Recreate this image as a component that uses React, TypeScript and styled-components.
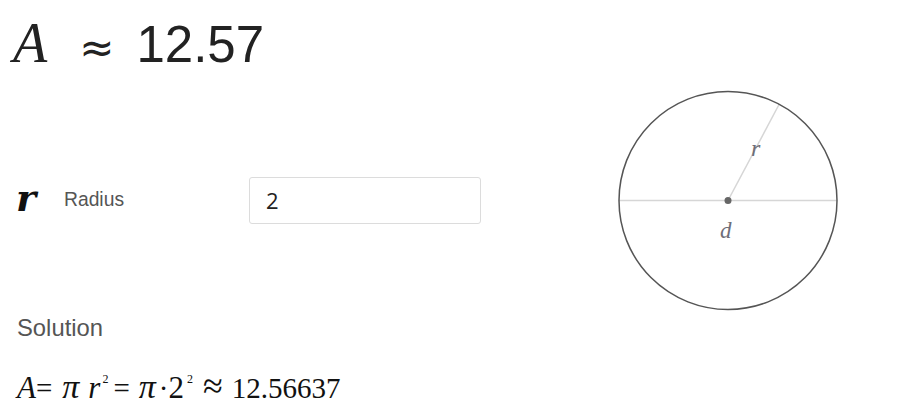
import React from "react";
import styled, { createGlobalStyle } from "styled-components";

const Global = createGlobalStyle`
  html, body { margin: 0; padding: 0; background: #fff; }
  body { font-family: "Liberation Sans", Arial, sans-serif; }
`;

const Page = styled.div`
  width: 916px;
  height: 412px;
  display: flex;
  flex-direction: row;
  overflow: hidden;
`;

const Left = styled.div`
  flex: 1;
  display: flex;
  flex-direction: column;
  padding-left: 13px;
`;

const Header = styled.div`
  display: flex;
  align-items: baseline;
  height: 92px;
  line-height: 87px;
  color: #222;
`;

const MathVar = styled.span<{ $size: number }>`
  font-family: "Liberation Serif", "Times New Roman", serif;
  font-style: italic;
  font-size: ${(p) => p.$size}px;
`;

const BoldVar = styled.span`
  font-family: "DejaVu Serif", "Liberation Serif", serif;
  font-style: italic;
  font-weight: 700;
  font-size: 38px;
`;

const Approx = styled.span`
  font-family: "DejaVu Sans", sans-serif;
  font-size: 42px;
  margin-left: 32px;
  margin-right: 22px;
`;

const BigNumber = styled.span`
  font-family: "Liberation Sans", Arial, sans-serif;
  font-size: 51px;
`;

const InputRow = styled.div`
  display: flex;
  align-items: center;
  height: 48px;
  margin-top: 84px;
  padding-left: 3px;
`;

const VarCell = styled.div`
  width: 48px;
  color: #111;
  line-height: 1;
  padding-bottom: 4px;
`;

const FieldLabel = styled.div`
  width: 185px;
  font-size: 19.3px;
  color: #555;
`;

const NumberInput = styled.input`
  box-sizing: border-box;
  width: 232px;
  height: 47px;
  border: 1px solid #dcdcdc;
  border-radius: 3px;
  padding: 0 16px;
  font-family: "Open Sans", "Noto Sans", sans-serif;
  font-size: 22px;
  color: #222;
  outline: none;
`;

const SolutionLabel = styled.div`
  margin-top: 90px;
  padding-left: 4px;
  font-size: 23.8px;
  color: #555;
`;

const Formula = styled.div`
  margin-top: 23px;
  padding-left: 4px;
  font-family: "Liberation Serif", "Times New Roman", serif;
  font-size: 29px;
  color: #111;
  white-space: nowrap;
  display: flex;
  align-items: baseline;
`;

const Sym = styled.span<{ $gap?: number; $italic?: boolean; $size?: number }>`
  font-style: ${(p) => (p.$italic ? "italic" : "normal")};
  font-size: ${(p) => p.$size ?? 29}px;
  margin-right: ${(p) => p.$gap ?? 0}px;
`;

const Sup = styled.span<{ $gap?: number }>`
  font-size: 12px;
  position: relative;
  top: -15px;
  margin-right: ${(p) => p.$gap ?? 0}px;
`;

const Figure = styled.div`
  width: 240px;
  margin-right: 68px;
  padding-top: 80px;
`;

const labelColor = "#6e6e78";

function CircleFigure() {
  const cx = 120;
  const cy = 120.5;
  const r = 109;
  const ang = (62 * Math.PI) / 180;
  const ex = cx + r * Math.cos(ang);
  const ey = cy - r * Math.sin(ang);
  return (
    <svg width="240" height="240" viewBox="0 0 240 240">
      <line x1={cx - r} y1={cy} x2={cx + r} y2={cy} stroke="#d6d6d6" strokeWidth="1.5" />
      <line x1={cx} y1={cy} x2={ex} y2={ey} stroke="#d6d6d6" strokeWidth="1.5" />
      <circle cx={cx} cy={cy} r={r} fill="none" stroke="#555" strokeWidth="1.5" />
      <circle cx={cx} cy={cy} r="3.5" fill="#666" />
      <text x={143} y={76} fontFamily="Liberation Serif, serif" fontStyle="italic" fontSize="24" fill={labelColor}>r</text>
      <text x={112} y={158} fontFamily="Liberation Serif, serif" fontStyle="italic" fontSize="23" fill={labelColor}>d</text>
    </svg>
  );
}

export default function App() {
  return (
    <>
      <Global />
      <Page>
        <Left>
          <Header>
            <MathVar $size={56}>A</MathVar>
            <Approx>≈</Approx>
            <BigNumber>12.57</BigNumber>
          </Header>
          <InputRow>
            <VarCell>
              <BoldVar>r</BoldVar>
            </VarCell>
            <FieldLabel>Radius</FieldLabel>
            <NumberInput type="text" defaultValue="2" />
          </InputRow>
          <SolutionLabel>Solution</SolutionLabel>
          <Formula>
            <Sym $italic $size={31}>A</Sym>
            <Sym $gap={10}>=</Sym>
            <Sym $italic $size={34} $gap={9}>π</Sym>
            <Sym $italic $size={31} $gap={2}>r</Sym>
            <Sup $gap={5}>2</Sup>
            <Sym $gap={9}>=</Sym>
            <Sym $italic $size={34} $gap={3}>π</Sym>
            <Sym $gap={0}>·</Sym>
            <Sym $size={31} $gap={3}>2</Sym>
            <Sup $gap={10}>2</Sup>
            <Sym $size={36} $gap={9}>≈</Sym>
            <Sym>12.56637</Sym>
          </Formula>
        </Left>
        <Figure>
          <CircleFigure />
        </Figure>
      </Page>
    </>
  );
}
